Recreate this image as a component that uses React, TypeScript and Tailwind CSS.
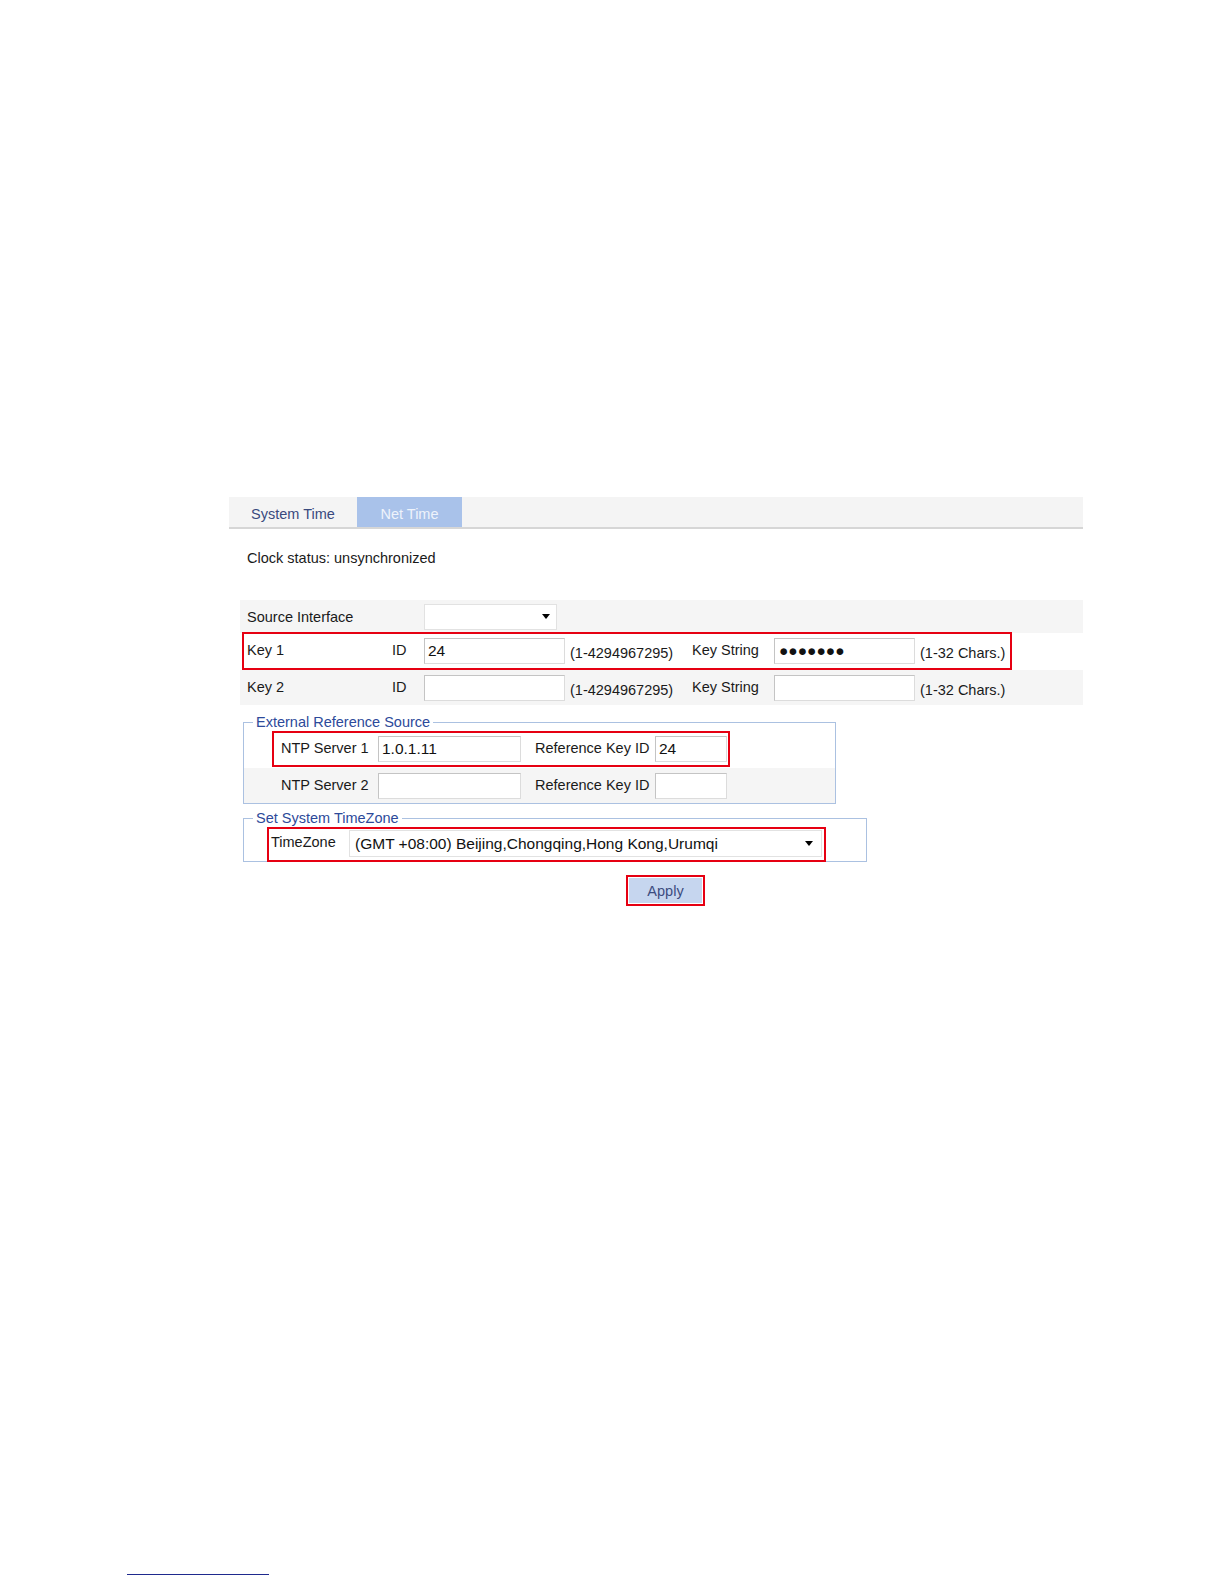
import React from "react";

function Input({ w, value, className = "" }: { w: string; value?: string; className?: string }) {
  return (
    <div
      className={`${w} h-[26px] bg-white border border-[#dcdcdc] border-t-[#c4c4c4] border-l-[#c4c4c4] flex items-center pl-[3px] text-[15.5px] text-[#111] ${className}`}
    >
      {value}
    </div>
  );
}

function Arrow() {
  return <div className="w-0 h-0 border-l-[4px] border-r-[4px] border-t-[5px] border-l-transparent border-r-transparent border-t-black" />;
}

export default function App() {
  return (
    <div className="w-[1224px] h-[1584px] bg-white flex flex-col font-['Liberation_Sans',Arial,sans-serif] text-[14.5px] text-[#1a1a1a]">
      <div className="pt-[497px] pl-[229px] w-[1083px]">
        {/* tab bar */}
        <div className="flex h-[32px] bg-[#f4f4f4] border-b-2 border-[#d6d6d6] w-[854px]">
          <div className="w-[128px] flex items-center justify-center text-[#3a4a7e] pt-[5px]">System Time</div>
          <div className="w-[105px] flex items-center justify-center bg-[#a9c2ea] text-[#eef3fb] pt-[5px]">Net Time</div>
        </div>

        <div className="mt-[19px] pl-[18px] leading-[20px]">Clock status: unsynchronized</div>

        {/* key rows */}
        <div className="mt-[32px] ml-[11px] w-[843px] flex flex-col">
          <div className="h-[33px] bg-[#f5f5f5] flex items-center">
            <div className="w-[184px] pl-[7px] pt-[2px]">Source Interface</div>
            <div className="w-[133px] h-[26px] bg-white border border-[#e2e2e2] flex items-center justify-end pr-[6px]">
              <Arrow />
            </div>
          </div>

          <div className="h-[36px] bg-white flex items-center relative">
            <div className="absolute left-[2px] top-[-1px] w-[770px] h-[38px] border-2 border-[#e60012]" />
            <div className="w-[152px] pl-[7px]">Key 1</div>
            <div className="w-[32px]">ID</div>
            <Input w="w-[141px]" value="24" />
            <div className="w-[127px] pl-[5px] pt-[6px]">(1-4294967295)</div>
            <div className="w-[82px]">Key String</div>
            <Input w="w-[141px]" value="●●●●●●●" className="text-[12.5px] pl-[4px]" />
            <div className="pl-[5px] pt-[6px]">(1-32 Chars.)</div>
          </div>

          <div className="h-[35px] mt-px bg-[#f5f5f5] flex items-center">
            <div className="w-[152px] pl-[7px]">Key 2</div>
            <div className="w-[32px]">ID</div>
            <Input w="w-[141px]" />
            <div className="w-[127px] pl-[5px] pt-[6px]">(1-4294967295)</div>
            <div className="w-[82px]">Key String</div>
            <Input w="w-[141px]" />
            <div className="pl-[5px] pt-[6px]">(1-32 Chars.)</div>
          </div>
        </div>

        {/* External Reference Source */}
        <fieldset className="mt-[9px] ml-[14px] w-[593px] border border-[#abc1e1]">
          <legend className="ml-[9px] px-[3px] leading-[16px] text-[#2d4a9a]">External Reference Source</legend>
          <div className="h-[37px] flex items-center relative pl-[37px]">
            <div className="absolute left-[28px] top-[1px] w-[458px] h-[36px] border-2 border-[#e60012]" />
            <div className="w-[97px]">NTP Server 1</div>
            <Input w="w-[143px]" value="1.0.1.11" />
            <div className="w-[134px] pl-[14px]">Reference Key ID</div>
            <Input w="w-[72px]" value="24" />
          </div>
          <div className="h-[35px] mt-px bg-[#f5f5f5] flex items-center pl-[37px]">
            <div className="w-[97px]">NTP Server 2</div>
            <Input w="w-[143px]" />
            <div className="w-[134px] pl-[14px]">Reference Key ID</div>
            <Input w="w-[72px]" />
          </div>
        </fieldset>

        {/* Set System TimeZone */}
        <fieldset className="mt-[6px] ml-[14px] w-[624px] border border-[#abc1e1]">
          <legend className="ml-[9px] px-[3px] leading-[16px] text-[#2d4a9a]">Set System TimeZone</legend>
          <div className="h-[35px] flex items-center relative pl-[27px]">
            <div className="absolute left-[23px] top-[1px] w-[559px] h-[35px] border-2 border-[#e60012]" />
            <div className="w-[78px] pb-[2px]">TimeZone</div>
            <div className="w-[473px] h-[27px] bg-white border border-[#e2e2e2] flex items-center justify-between pl-[5px] pr-[8px] text-[15.5px] text-[#111]">
              <span>(GMT +08:00) Beijing,Chongqing,Hong Kong,Urumqi</span>
              <Arrow />
            </div>
          </div>
        </fieldset>

        {/* Apply */}
        <div className="mt-[13px] ml-[397px] w-[79px] h-[31px] border-2 border-[#e60012] p-px">
          <div className="w-full h-full bg-[#c6d6ef] flex items-center justify-center text-[#3b4c80] pt-[3px]">Apply</div>
        </div>
      </div>

      <div className="mt-auto mb-[9px] ml-[127px] w-[142px] h-px bg-[#1f2a8e]" />
    </div>
  );
}
